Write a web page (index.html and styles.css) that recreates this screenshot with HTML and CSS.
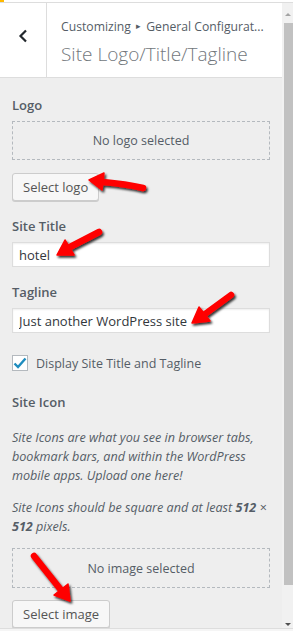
FILE: index.html
```html
<!DOCTYPE html>
<html lang="en">
<head>
  <meta charset="UTF-8" />
  <title>Site Logo/Title/Tagline</title>
  <link rel="stylesheet" href="styles.css">
</head>
<body>
  <div class="topline"><span class="admin-mark"></span></div>
  <div class="frame">
    <div class="panel">
      <!-- Cabecalho -->
      <div class="header">
        <button class="back" aria-label="Back">
          <svg width="10" height="14" viewBox="0 0 10 14"><path d="M8 1.5 2.5 7 8 12.5" fill="none" stroke="#23282d" stroke-width="2.2"/></svg>
        </button>
        <div class="titles">
          <div class="crumb">Customizing <span class="sep">&#9656;</span> General Configurat...</div>
          <div class="title">Site Logo/Title/Tagline</div>
        </div>
      </div>

      <!-- Controles -->
      <div class="controls">
        <div class="control">
          <div class="label">Logo</div>
          <div class="placeholder">No logo selected</div>
          <button class="btn">Select logo</button>
        </div>

        <div class="control">
          <div class="label">Site Title</div>
          <input class="field" type="text" value="hotel">
        </div>

        <div class="control">
          <div class="label">Tagline</div>
          <input class="field" type="text" value="Just another WordPress site">
        </div>

        <div class="control check-control">
          <label class="check">
            <span class="box">
              <svg width="14" height="12" viewBox="0 0 14 12"><path d="M1.5 6.5 5 10 12.5 1.5" fill="none" stroke="#1e8cbe" stroke-width="2.4"/></svg>
            </span>
            Display Site Title and Tagline
          </label>
        </div>

        <div class="control">
          <div class="label">Site Icon</div>
          <p class="desc first">Site Icons are what you see in browser tabs, bookmark bars, and within the WordPress mobile apps. Upload one here!</p>
          <p class="desc last">Site Icons should be square and at least <strong>512</strong>&nbsp;&times; <strong>512</strong> pixels.</p>
          <div class="placeholder tall">No image selected</div>
          <button class="btn btn-image">Select image</button>
        </div>
      </div>

      <!-- Setas vermelhas -->
      <svg class="arrows" width="282" height="631" viewBox="0 0 282 631">
        <defs>
          <filter id="sombra" x="-30%" y="-30%" width="160%" height="160%">
            <feDropShadow dx="1.5" dy="2" stdDeviation="1.3" flood-color="#000" flood-opacity="0.8"/>
          </filter>
        </defs>
        <g filter="url(#sombra)">
          <g stroke="#f00" stroke-width="6.5" stroke-linecap="round" fill="none">
            <path d="M143 188 Q126 184 103 182"/>
            <path d="M99 232 L70 247"/>
            <path d="M231 295 L205 314"/>
            <path d="M34 556 L61 590"/>
          </g>
          <g fill="#f00" stroke="#f00" stroke-width="1.5" stroke-linejoin="round">
            <polygon points="89,180 104,173 102,190"/>
            <polygon points="57,255 65,240 74,255"/>
            <polygon points="192,323 199,307 210,321"/>
            <polygon points="70,601 54,595 68,584"/>
          </g>
        </g>
      </svg>
    </div>
    <div class="scrollbar">
      <span class="arrow up"></span>
      <span class="thumb"></span>
      <span class="arrow down"></span>
    </div>
  </div>
  <div class="bottomline"></div>
</body>
</html>
```

FILE: styles.css
```css
body {
  margin: 0;
  width: 293px;
  height: 631px;
  overflow: hidden;
  font-family: "Open Sans", sans-serif;
  font-size: 13px;
  color: #555d66;
  background-color: #eeeeee;
}

.topline {
  height: 2px;
  border-bottom: 1px solid #dddddd;
  background-color: #ffffff;
}

.admin-mark {
  display: block;
  width: 4px;
  height: 2px;
  background-color: #ffb900;
}

.frame {
  display: flex;
  height: 625px;
}

.panel {
  position: relative;
  flex: 1;
  overflow: hidden;
}

.header {
  display: flex;
  height: 74px;
  background-color: #ffffff;
  border-bottom: 1px solid #dddddd;
}

.back {
  width: 47px;
  border: none;
  border-right: 1px solid #dddddd;
  background: #ffffff;
  display: flex;
  align-items: center;
  justify-content: center;
  padding: 0 0 8px 0;
}

.titles {
  padding: 13px 0 0 14px;
  white-space: nowrap;
}

.crumb {
  font-size: 12.2px;
  color: #555d66;
  line-height: 20px;
}

.sep {
  font-size: 9px;
  vertical-align: 2px;
  margin: 0 2px;
}

.title {
  font-size: 19px;
  font-weight: 300;
  color: #72777c;
  line-height: 28px;
  margin-top: 3px;
}

.controls {
  padding: 17px 12px 0 12px;
}

.control {
  margin-bottom: 15px;
}

.label {
  font-size: 13px;
  font-weight: 600;
  line-height: 20px;
  margin-bottom: 6px;
}

.placeholder {
  height: 37px;
  border: 1px dashed #b4b9be;
  display: flex;
  align-items: center;
  justify-content: center;
  font-size: 12.5px;
  color: #555d66;
}

.placeholder.tall {
  height: 38px;
}

.btn {
  margin-top: 13px;
  height: 28px;
  padding: 0 10px;
  font-family: inherit;
  font-size: 13px;
  color: #555555;
  background-color: #f7f7f7;
  border: 1px solid #cccccc;
  border-radius: 3px;
  box-shadow: 0 1px 0 #cccccc;
}

.btn-image {
  margin-top: 12px;
}

.field {
  display: block;
  box-sizing: border-box;
  width: 100%;
  height: 25px;
  padding: 0 6px;
  font-family: inherit;
  font-size: 13px;
  color: #32373c;
  background-color: #ffffff;
  border: 1px solid #dddddd;
  box-shadow: inset 0 1px 2px rgba(0, 0, 0, 0.07);
}

.check-control {
  margin-bottom: 19px;
}

.check {
  display: flex;
  align-items: center;
  gap: 8px;
  height: 20px;
  padding-top: 5px;
  font-size: 12.5px;
}

.box {
  box-sizing: border-box;
  width: 16px;
  height: 16px;
  border: 1px solid #b4b9be;
  background-color: #ffffff;
  display: flex;
  align-items: center;
  justify-content: center;
}

.desc {
  font-style: italic;
  font-size: 12.6px;
  line-height: 19px;
  margin: 0 0 13px 0;
}

.desc.first {
  margin-top: 16px;
}

.desc.last {
  margin-bottom: 12px;
}

.arrows {
  position: absolute;
  left: 0;
  top: -3px;
  pointer-events: none;
}

.scrollbar {
  width: 11px;
  background-color: #f1f1f1;
  display: flex;
  flex-direction: column;
  align-items: center;
}

.thumb {
  width: 9px;
  margin-left: 2px;
  flex: 1;
  background-color: #c1c1c1;
}

.arrow {
  width: 0;
  height: 3px;
  border-left: 3px solid transparent;
  border-right: 3px solid transparent;
  box-sizing: border-box;
}

.arrow.up {
  border-bottom: 3px solid #a3a3a3;
  margin-top: 10px;
  margin-bottom: 7px;
}

.arrow.down {
  border-top: 3px solid #505050;
  margin-top: 38px;
  margin-bottom: 2px;
}

.bottomline {
  height: 3px;
  border-top: 1px solid #dddddd;
  background-color: #f5f5f5;
}
```
